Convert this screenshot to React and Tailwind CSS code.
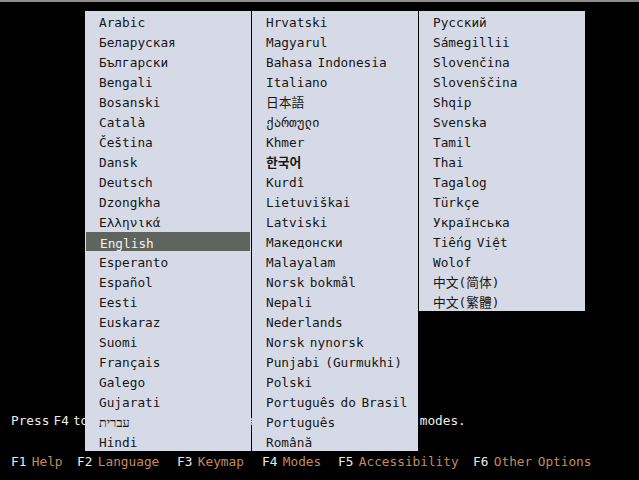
import React from "react";

const col1 = ["Arabic","Беларуская","Български","Bengali","Bosanski","Català","Čeština","Dansk","Deutsch","Dzongkha","Ελληνικά","English","Esperanto","Español","Eesti","Euskaraz","Suomi","Français","Galego","Gujarati","עברית","Hindi"];
const col2 = ["Hrvatski","Magyarul","Bahasa Indonesia","Italiano","日本語","ქართული","Khmer","한국어","Kurdî","Lietuviškai","Latviski","Македонски","Malayalam","Norsk bokmål","Nepali","Nederlands","Norsk nynorsk","Punjabi (Gurmukhi)","Polski","Português do Brasil","Português","Română"];
const col3 = ["Русский","Sámegillii","Slovenčina","Slovenščina","Shqip","Svenska","Tamil","Thai","Tagalog","Türkçe","Українська","Tiếng Việt","Wolof","中文(简体)","中文(繁體)"];

function Col({ items, h }) {
  return (
    <div className={`w-[166px] bg-[#d6dae6] flex flex-col ${h}`}>
      {items.map((t) => {
        const sel = t === "English";
        const bold = t === "한국어";
        return (
          <div
            key={t}
            className={`h-5 leading-[24px] pl-[14px] whitespace-nowrap ${sel ? "bg-[#5f645f] text-[#f2f2f2] mt-px h-[19px] leading-[22px] mr-px ml-px pl-[13px]" : "text-[#161616]"} ${bold ? "font-bold" : ""}`}
          >
            {t}
          </div>
        );
      })}
    </div>
  );
}

const keys = [
  ["F1", "Help", "w-[66px]"],
  ["F2", "Language", "w-[100px]"],
  ["F3", "Keymap", "w-[85px]"],
  ["F4", "Modes", "w-[76px]"],
  ["F5", "Accessibility", "w-[135px]"],
  ["F6", "Other Options", ""],
];

export default function App() {
  return (
    <div
      className="relative w-[639px] h-[480px] bg-black overflow-hidden flex flex-col text-[12.75px] [word-spacing:-2.2px]"
      style={{ fontFamily: '"DejaVu Sans Mono", "Noto Sans CJK SC", "Noto Sans CJK TC", "Noto Sans CJK KR", monospace' }}
    >
      <div className="h-[2px] bg-[#8c8c8c]" />
      <div className="flex-1" />
      <div className="pl-[11px] h-5 leading-5 text-[#ececec] whitespace-nowrap [word-spacing:-3.6px]">
        Press F4 to select alternative start-up and installation modes.
      </div>
      <div className="h-[21px]" />
      <div className="pl-[11px] h-5 leading-5 flex whitespace-nowrap mb-[8px]">
        {keys.map(([k, l, w]) => (
          <div key={k} className={`${w} shrink-0 text-[#ececec]`}>
            {k} <span className="text-[#c68a5c]">{l}</span>
          </div>
        ))}
      </div>

      <div className="absolute left-[85px] top-[11px] flex items-start gap-px">
        <Col items={col1} h="h-[440px]" />
        <Col items={col2} h="h-[440px]" />
        <Col items={col3} h="h-[300px]" />
      </div>
    </div>
  );
}
